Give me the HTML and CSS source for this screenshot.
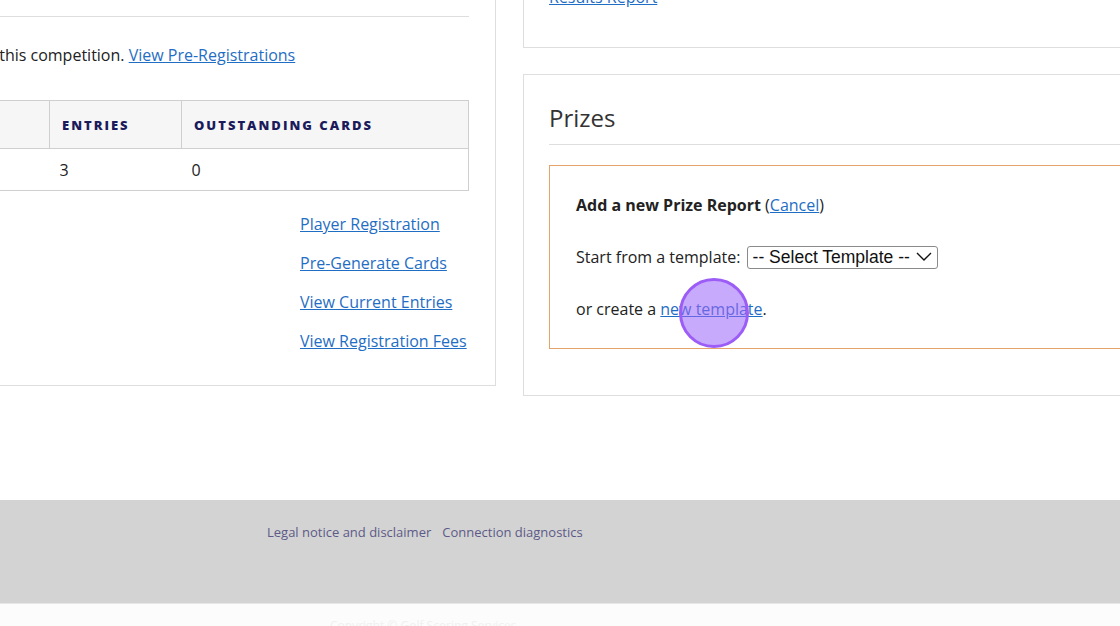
FILE: index.html
```html
<!DOCTYPE html>
<html lang="en">
<head>
  <meta charset="UTF-8">
  <meta name="viewport" content="width=device-width, initial-scale=1.0">
  <title>Competition Setup</title>
  <link rel="stylesheet" href="styles.css">
</head>
<body>
  <main class="layout">
    <section class="card registration">
      <h2 class="card-title">Registration</h2>
      <p class="intro">Players may pre-register for this competition. <a href="#">View Pre-Registrations</a></p>
      <table class="entries">
        <thead>
          <tr>
            <th class="col-division">Division</th>
            <th class="col-entries">Entries</th>
            <th>Outstanding Cards</th>
          </tr>
        </thead>
        <tbody>
          <tr>
            <td>Open</td>
            <td>3</td>
            <td>0</td>
          </tr>
        </tbody>
      </table>
      <ul class="action-links">
        <li><a href="#">Player Registration</a></li>
        <li><a href="#">Pre-Generate Cards</a></li>
        <li><a href="#">View Current Entries</a></li>
        <li><a href="#">View Registration Fees</a></li>
      </ul>
    </section>

    <div class="side">
      <section class="card reports">
        <a href="#">Results Report</a>
      </section>

      <section class="card prizes">
        <h2 class="card-title">Prizes</h2>
        <div class="prize-form">
          <p><strong>Add a new Prize Report</strong> (<a href="#">Cancel</a>)</p>
          <p>Start from a template:
            <span class="select-wrap">
              <select>
                <option>-- Select Template --</option>
              </select>
              <svg class="chevron" width="16" height="9" viewBox="0 0 16 9"><path d="M1 1 L8 8 L15 1" fill="none" stroke="#111" stroke-width="1.4"/></svg>
            </span>
          </p>
          <p>or create a <a href="#">new template</a>.</p>
          <span class="click-marker"></span>
        </div>
      </section>
    </div>
  </main>

  <footer class="site-footer">
    <nav class="footer-links">
      <a href="#">Legal notice and disclaimer</a>
      <a href="#">Connection diagnostics</a>
    </nav>
  </footer>
  <div class="sub-footer">Copyright &copy; Golf Scoring Services</div>
</body>
</html>
```

FILE: styles.css
```css
html, body {
  overflow: hidden;
}
body {
  margin: 0;
  font-family: 'Open Sans', 'Liberation Sans', sans-serif;
  font-size: 16px;
  line-height: 24px;
  color: #222;
  background: #fff;
}
a {
  color: #1f6ec4;
}

.layout {
  display: grid;
  grid-template-columns: 735px 640px;
  gap: 27px;
  align-items: start;
  margin-left: -239px;
  margin-top: -55px;
}
.side {
  display: flex;
  flex-direction: column;
  gap: 26px;
}
.card {
  border: 1px solid #dedede;
  padding: 26px;
}
.card-title {
  margin: 0;
  font-size: 24px;
  font-weight: 400;
  line-height: 36px;
  color: #333;
  padding-bottom: 8px;
  border-bottom: 1px solid #dedede;
}

/* registration */
.intro {
  margin: 26px 0 33px;
}
.entries {
  width: 100%;
  border-collapse: collapse;
  border: 1px solid #cfcfcf;
}
.entries th {
  background: #f6f6f6;
  color: #1b1b5c;
  font-size: 13px;
  font-weight: 800;
  letter-spacing: 2px;
  text-transform: uppercase;
  text-align: left;
  height: 47px;
  padding: 0 12px;
  border: 1px solid #cfcfcf;
}
.entries td {
  height: 41px;
  padding: 0 10px;
}
.col-entries {
  width: 107px;
}
.entries th:last-child {
  width: 262px;
}
.action-links {
  list-style: none;
  margin: 21px 0 6px auto;
  padding: 0;
  width: 169px;
  display: flex;
  flex-direction: column;
  gap: 15px;
}

/* reports */
.reports {
  padding: 39px 25px 38px;
}

/* prizes */
.prizes {
  padding: 25px 25px 26px;
}
.prizes .card-title {
  margin-bottom: 20px;
}
.prize-form {
  position: relative;
  border: 1px solid #e4a36a;
  padding: 27px 26px;
  margin-bottom: 20px;
}
.prize-form p {
  margin: 0;
}
.prize-form p + p {
  margin-top: 28px;
}
.select-wrap {
  position: relative;
  display: inline-block;
  vertical-align: top;
  margin-left: 2px;
}
.select-wrap select {
  appearance: none;
  -webkit-appearance: none;
  font-family: 'Liberation Sans', Arial, sans-serif;
  font-size: 17.5px;
  color: #111;
  background: #fff;
  border: 1px solid #8a8a8a;
  border-radius: 3px;
  height: 23px;
  width: 191px;
  padding: 0 0 0 5px;
  margin-top: 0;
}
.chevron {
  position: absolute;
  right: 6px;
  top: 7px;
  pointer-events: none;
}
.click-marker {
  position: absolute;
  left: 129px;
  top: 112px;
  width: 64px;
  height: 64px;
  border-radius: 50%;
  border: 3px solid #9c5cf6;
  background: rgba(155, 100, 250, 0.55);
}

/* footer */
.site-footer {
  margin-top: 104px;
  background: #d3d3d3;
  height: 103px;
  box-sizing: border-box;
  padding: 23px 0 0 267px;
}
.footer-links {
  display: flex;
  gap: 11px;
  font-size: 13px;
  line-height: 18px;
}
.footer-links a {
  color: #5d5a88;
  text-decoration: none;
}
.sub-footer {
  border-top: 1px solid #e7e7e7;
  background: #fcfcfc;
  padding: 10px 0 0 330px;
  font-size: 12px;
  color: #f0f0f0;
  height: 40px;
}
```
